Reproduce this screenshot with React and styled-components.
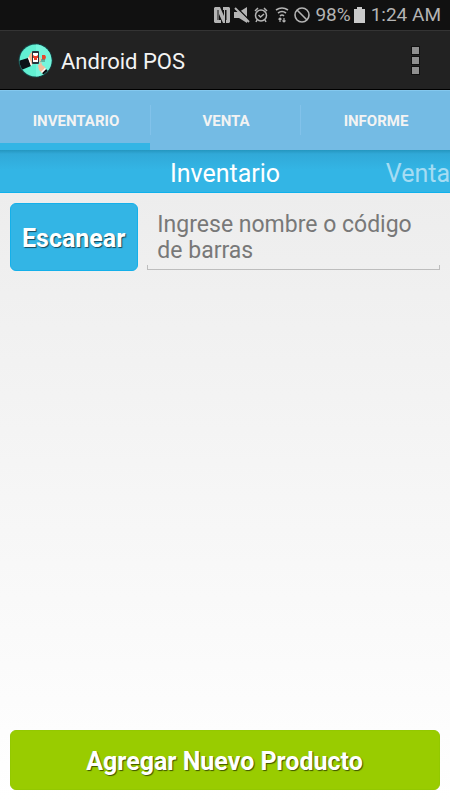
import styled, { createGlobalStyle } from "styled-components"

const EstiloGlobal = createGlobalStyle`
    * {
        box-sizing: border-box;
    }

    body {
        margin: 0;
        font-family: Roboto, sans-serif;
        background-color: #fff;
    }

    button, textarea {
        font-family: inherit;
        margin: 0;
        border: 0;
    }
`
const Pantalla = styled.div`
    display: flex;
    flex-direction: column;
    min-height: 100vh;
`
const BarraEstado = styled.div`
    display: flex;
    align-items: center;
    justify-content: flex-end;
    height: 30px;
    padding-right: 9px;
    background-color: #111;
    color: #b4b4b4;
    font-size: 19px;
    line-height: 30px;

    svg {
        display: block;
        flex: none;
    }
`
const IconosEstado = styled.div`
    display: flex;
    align-items: center;
    gap: 4px;
    margin-right: 5px;
`
const Bateria = styled.svg`
    margin: 0 6px 0 3px;
`
const Encabezado = styled.header`
    display: flex;
    align-items: center;
    height: 60px;
    padding: 0 18px;
    background-color: #222;
    border-top: 1px solid #343434;
    border-bottom: 1px solid #000;
`
const Titulo = styled.h1`
    flex: 1;
    margin: 0 0 0 8px;
    padding-top: 3px;
    color: #f3f3f3;
    font-size: 22px;
    font-weight: 400;
    line-height: 28px;
`
const BotonMenu = styled.button`
    display: flex;
    flex-direction: column;
    align-items: center;
    gap: 3px;
    width: 34px;
    padding: 0;
    background: none;
`
const Punto = styled.span`
    width: 7px;
    height: 7px;
    background-color: #909090;
    outline: 1px solid #111;
`
const Pestanas = styled.nav`
    display: grid;
    grid-template-columns: repeat(3, 1fr);
    height: 60px;
    background-color: #74bbe4;
    border-top: 1px solid #84c8ee;
`
const Pestana = styled.button`
    padding: 1px 0 0 2px;
    color: #f3f3f3;
    font-size: 15px;
    font-weight: 700;
    text-transform: uppercase;
    background-color: transparent;
    background-image: linear-gradient(#82c2ea, #82c2ea);
    background-size: 1px 30px;
    background-position: 0 14px;
    background-repeat: no-repeat;
    box-shadow: ${({ $activa }) => $activa ? "inset 0 -7px #33b5e5" : "none"};

    &:first-child {
        background-image: none;
    }
`
const FranjaTitulos = styled.div`
    display: grid;
    grid-template-columns: repeat(3, 1fr);
    height: 43px;
    background: linear-gradient(#2496bf, #31a9d8 4px, #33b5e5 20px);
    border-bottom: 1px solid #0fb1ec;
    font-size: 25px;
    line-height: 47px;
    color: #fff;
`
const TituloActual = styled.span`
    grid-column: 2;
    text-align: center;
`
const TituloSiguiente = styled.span`
    text-align: right;
    color: #a5dcf3;
`
const Contenido = styled.main`
    flex: 1;
    display: flex;
    flex-direction: column;
    justify-content: space-between;
    padding: 10px;
    background: linear-gradient(#ededed, #fff);
`
const Buscador = styled.div`
    display: flex;
    align-items: stretch;
    gap: 9px;
`
const Boton = styled.button`
    height: ${({ $alto }) => $alto};
    padding: 3px 12px 0 11px;
    border-radius: 6px;
    border: 1px solid ${({ $borde }) => $borde};
    background-color: ${({ $fondo }) => $fondo};
    color: #fff;
    font-size: 25px;
    font-weight: 700;
    text-shadow: 1px 1px 1px rgba(0, 0, 0, 0.6);
    white-space: nowrap;
`
const CampoBusqueda = styled.label`
    flex: 1;
    display: flex;
    height: 67px;
    border-bottom: 1px solid #bdbdbd;
    background-image: linear-gradient(#bdbdbd, #bdbdbd), linear-gradient(#bdbdbd, #bdbdbd);
    background-size: 1px 4px;
    background-position: left bottom, right bottom;
    background-repeat: no-repeat;
`
const AreaTexto = styled.textarea`
    width: 100%;
    padding: 9px 10px 0;
    background: none;
    outline: 0;
    resize: none;
    overflow: hidden;
    color: #222;
    font-size: 23px;
    line-height: 26px;

    &::placeholder {
        color: #787878;
        opacity: 1;
    }
`

const pestanas = ["Inventario", "Venta", "Informe"]

const Logo = () => (
    <svg width="35" height="35" viewBox="0 0 35 35" aria-hidden="true">
        <defs>
            <clipPath id="circulo"><circle cx="17.5" cy="17.5" r="16" /></clipPath>
        </defs>
        <circle cx="17.5" cy="17.5" r="17" fill="#17494b" />
        <g clipPath="url(#circulo)">
            <rect width="35" height="35" fill="#62f0d2" />
            <path d="M18 0h17v35H18z" fill="#75f5dc" />
            <path d="M9 17l3-6 3-3v13l-4 2z" fill="#f5b793" />
            <path d="M0 18l10-3 3 8-12 5z" fill="#0c1116" />
            <path d="M10 15l1-1 3 8-1 1z" fill="#fff" />
            <rect x="14" y="8" width="7" height="13" rx="1" fill="#26343b" />
            <rect x="15" y="10" width="5" height="9" fill="#fff" />
            <path d="M15 12l1.500 1h2l1.500-1v3h-1v2h-3v-2h-1z" fill="#e83f27" />
            <path d="M24 12h3l1 2-1 3h-3z" fill="#e8482f" />
            <path d="M22 16h5v3h-5z" fill="#4e9a8d" opacity="0.7" />
            <path d="M21 14l2 1v3l-2 1z" fill="#f5bd9c" />
            <path d="M20 22l2-1 1-3 1 4 3 2 1 4-3 3-4-4z" fill="#f5bd9c" />
            <path d="M24 30l4-4 3 3-4 4z" fill="#0c1116" />
            <path d="M23 29l4-4 1 1-4 4z" fill="#fff" />
        </g>
    </svg>
)

const IconoNfc = () => (
    <svg width="16" height="16" viewBox="0 0 16 16" aria-hidden="true">
        <path d="M1 0h5l4 9V3h1v13H9L5 7v6h2v3H1l-1-1V1z" fill="currentColor" />
        <path d="M9 0h6l1 1v14l-1 1h-3V3H9z" fill="currentColor" />
        <path d="M4 3v10M12 3v10" stroke="#111" strokeWidth="1" />
    </svg>
)

const IconoSilencio = () => (
    <svg width="16" height="16" viewBox="0 0 16 16" aria-hidden="true">
        <path d="M0 5h5l8-5v16l-8-5H0z" fill="currentColor" />
        <path d="M2 0l14 14" stroke="#111" strokeWidth="1.6" />
        <path d="M1 1l14 14" stroke="currentColor" strokeWidth="2" />
    </svg>
)

const IconoAlarma = () => (
    <svg width="15" height="16" viewBox="0 0 15 16" fill="none" stroke="currentColor" strokeWidth="1.5" aria-hidden="true">
        <circle cx="7" cy="8.5" r="5.5" />
        <path d="M1 4l3-3M13 4l-3-3M3 13l-1 2M11 13l1 2M4.500 8l2 2L10 7" />
    </svg>
)

const IconoWifi = () => (
    <svg width="17" height="16" viewBox="0 0 17 16" fill="none" stroke="currentColor" strokeWidth="1.6" aria-hidden="true">
        <path d="M3 3q6-4 12 0M5 6q4-3 8 0M7 9q2-2 4 0" />
        <path d="M7 11v4M5.500 12.500l1.500-1.500 1.500 1.500M11 11v4M9.500 13.500l1.500 1.500 1.500-1.500" strokeWidth="1.2" />
    </svg>
)

const IconoBloqueo = () => (
    <svg width="16" height="16" viewBox="0 0 16 16" fill="none" stroke="currentColor" strokeWidth="1.6" aria-hidden="true">
        <circle cx="8" cy="8" r="7" />
        <path d="M3 3l10 10" />
    </svg>
)

const App = () => {
    return <>
        <EstiloGlobal />
        <Pantalla>
            <BarraEstado>
                <IconosEstado>
                    <IconoNfc />
                    <IconoSilencio />
                    <IconoAlarma />
                    <IconoWifi />
                    <IconoBloqueo />
                </IconosEstado>
                <span>98%</span>
                <Bateria width="11" height="16" viewBox="0 0 11 16" aria-hidden="true">
                    <path d="M3 0h5v2h3v14H0V2h3z" fill="#cacaca" />
                </Bateria>
                <span>1:24 AM</span>
            </BarraEstado>

            <Encabezado>
                <Logo />
                <Titulo>Android POS</Titulo>
                <BotonMenu type="button" aria-label="Más opciones">
                    <Punto />
                    <Punto />
                    <Punto />
                </BotonMenu>
            </Encabezado>

            <Pestanas>
                {pestanas.map((nombre, i) => (
                    <Pestana key={nombre} type="button" $activa={i === 0}>{nombre}</Pestana>
                ))}
            </Pestanas>

            <FranjaTitulos>
                <TituloActual>Inventario</TituloActual>
                <TituloSiguiente>Venta</TituloSiguiente>
            </FranjaTitulos>

            <Contenido>
                <Buscador>
                    <Boton type="button" $alto="68px" $fondo="#33b5e5" $borde="#14b0ea">Escanear</Boton>
                    <CampoBusqueda>
                        <AreaTexto
                            rows={2}
                            aria-label="Buscar producto"
                            placeholder="Ingrese nombre o código de barras"
                        />
                    </CampoBusqueda>
                </Buscador>
                <Boton type="button" $alto="60px" $fondo="#99cc00" $borde="#93c800">Agregar Nuevo Producto</Boton>
            </Contenido>
        </Pantalla>
    </>
}

export default App
